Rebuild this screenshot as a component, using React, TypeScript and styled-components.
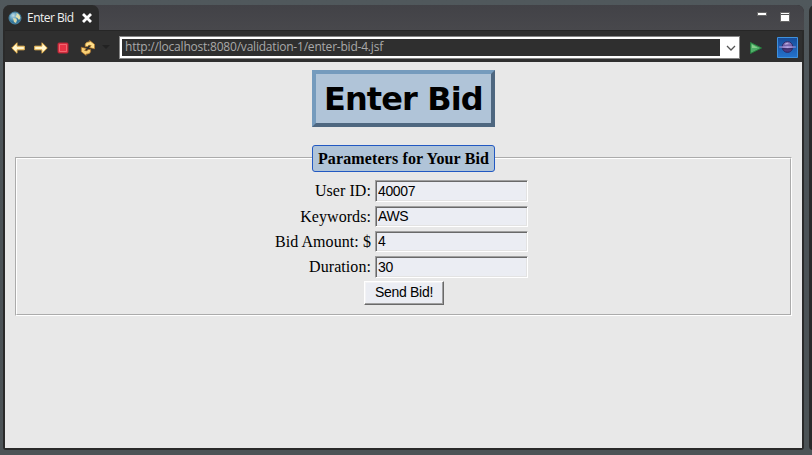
import React from "react";
import styled, { createGlobalStyle } from "styled-components";

const Global = createGlobalStyle`
  * { box-sizing: border-box; }
  body { margin: 0; overflow: hidden; background: #4c5357; }
`;

const Desktop = styled.div`
  display: flex;
  gap: 5px;
  width: 812px;
  height: 455px;
  padding: 5px 0 5px 3px;
  background: linear-gradient(#50585c, #4b5256 50%, #4c5356);
`;

const Window = styled.div`
  display: flex;
  flex-direction: column;
  width: 801px;
  height: 445px;
  flex: none;
  padding: 0 2px 2px;
  background: #2a2a2a;
  border-radius: 7px 7px 3px 3px;
`;

const Neighbour = styled.div`
  width: 10px;
  height: 445px;
  flex: none;
  background: #2a2a2a;
  border-radius: 6px 0 0 4px;
`;

const TabBar = styled.div`
  display: flex;
  height: 25px;
  flex: none;
  margin: 0 -2px;
  border-radius: 7px 7px 0 0;
  background: linear-gradient(#424247, #48484c);
`;

const Tab = styled.div`
  display: flex;
  align-items: center;
  width: 96px;
  height: 25px;
  padding-left: 5px;
  background: #2b2b2b;
  border-radius: 7px 7px 0 0;
`;

const TabTitle = styled.span`
  width: 50px;
  margin: 0 5px;
  font: 12px/16px "Open Sans", sans-serif;
  letter-spacing: -0.5px;
  white-space: nowrap;
  color: #f0f0f0;
`;

const WindowControls = styled.div`
  display: flex;
  margin-left: auto;
  padding: 7px 14px 0 0;
  gap: 13px;
`;

const Toolbar = styled.div`
  display: flex;
  align-items: center;
  height: 32px;
  flex: none;
  padding: 2px 4px 0 6px;
  background: #2f2f2f;
  border-top: 1px solid #262626;
`;

const Icon = styled.svg<{ $before?: number; $after?: number }>`
  display: block;
  flex: none;
  margin-left: ${(p) => p.$before ?? 0}px;
  margin-right: ${(p) => p.$after ?? 0}px;
`;

const Address = styled.div`
  display: flex;
  width: 621px;
  height: 23px;
  flex: none;
  border: 1px solid #858585;
  background: #fff;
  padding: 2px;
`;

const Url = styled.div`
  width: 598px;
  padding-left: 3px;
  background: #2f2f2f;
  color: #a9a9a9;
  font: 12px/16px "Open Sans", sans-serif;
  letter-spacing: -0.21px;
  white-space: nowrap;
`;

const Page = styled.main`
  flex: 1;
  padding: 8px 10px 0;
  background: #e8e8e8;
  color: #000;
  font: 16px/19px "Liberation Serif", serif;
`;

const Heading = styled.h1`
  width: 183px;
  height: 57px;
  margin: 0 0 17.6px 297px;
  padding-left: 8px;
  border: 4px solid;
  border-color: #759bbd #4e6780 #4e6780 #759bbd;
  background: #b0c4d8;
  font: bold 32px/51px "DejaVu Sans", sans-serif;
  letter-spacing: -0.9px;
  white-space: nowrap;
`;

const Fieldset = styled.fieldset`
  height: 171px;
  min-width: 0;
  margin: 0;
  padding: 8.4px 0 0;
  border: 2px groove #fff;
`;

const Legend = styled.legend`
  width: 183px;
  height: 27px;
  padding: 0;
  border: 1px solid #2259c2;
  border-radius: 3px;
  background: #b0c4d8;
  text-align: center;
  font-weight: bold;
  line-height: 25px;
  letter-spacing: 0.13px;
  white-space: nowrap;
`;

const Rows = styled.div`
  display: grid;
  grid-template-columns: 354px 153px;
  grid-template-rows: 22px 21px 21px 22px;
  column-gap: 4px;
  row-gap: 4px;
`;

const Label = styled.label`
  text-align: right;
  line-height: 21px;
  letter-spacing: 0.07px;
  white-space: nowrap;
`;

const Input = styled.input`
  width: 153px;
  height: 100%;
  min-height: 0;
  padding: 1px 2px;
  border: 1px solid;
  border-color: #a0a0a0 #fff #fff #a0a0a0;
  border-radius: 0;
  outline: none;
  background: #ebedf3;
  box-shadow: inset 1px 1px #696969, inset -1px -1px #e3e3e3;
  color: #000;
  font: 14px/17px "Liberation Sans", sans-serif;
  letter-spacing: -0.35px;
`;

const Submit = styled.button`
  display: block;
  width: 80px;
  height: 24px;
  margin: 3px 0 0 347px;
  padding: 0 0 1px;
  border: 1px solid;
  border-color: #fff #696969 #696969 #fff;
  background: #ebedf3;
  box-shadow: inset -1px -1px #a0a0a0, inset 1px 1px #f3f3f5;
  color: #000;
  font: 14px/20px "Liberation Sans", sans-serif;
  letter-spacing: -0.3px;
  white-space: nowrap;
`;

const ArrowIcon = ({ right, after }: { right?: boolean; after: number }) => (
  <Icon width="14" height="12" viewBox="0 0 14 12" $after={after}>
    <path
      d="M.8 6 6 .8V4.2h7.3v3.6H6v3.4Z"
      fill="#fff6cf"
      stroke="#eab650"
      transform={right ? "translate(14 0) scale(-1 1)" : undefined}
    />
  </Icon>
);

const fields = [
  { id: "user", label: "User ID:", value: "40007" },
  { id: "keywords", label: "Keywords:", value: "AWS" },
  { id: "amount", label: "Bid Amount: $", value: "4" },
  { id: "duration", label: "Duration:", value: "30" },
];

export default function App() {
  return (
    <Desktop>
      <Global />
      <Window>
        <TabBar>
          <Tab>
            <Icon width="14" height="14" viewBox="0 0 14 14">
              <defs>
                <radialGradient id="globe" cx=".35" cy=".3">
                  <stop offset="0" stopColor="#c3dde2" />
                  <stop offset=".55" stopColor="#6ba6c4" />
                  <stop offset="1" stopColor="#34769c" />
                </radialGradient>
              </defs>
              <circle cx="7" cy="7" r="6" fill="url(#globe)" stroke="#4a84a2" />
              <path d="M8.500 1.8 11.5 4l1 3-1.5 2-1.5-2-2-1 1-2Z" fill="#e0dfae" />
              <path d="M5 7l3 .5L9 9l-1 3-2-1Z" fill="#d8dcb0" />
            </Icon>
            <TabTitle>Enter Bid</TabTitle>
            <Icon width="10" height="10" viewBox="0 0 10 10">
              <path d="M1 1l8 8M9 1 1 9" stroke="#fff" strokeWidth="2.8" />
            </Icon>
          </Tab>
          <WindowControls>
            <Icon width="10" height="10" viewBox="0 0 10 10">
              <path d="M.5.5h9v3h-9Z" fill="#fff" stroke="#666" />
            </Icon>
            <Icon width="10" height="10" viewBox="0 0 10 10">
              <path d="M.5.5h9v9h-9Z" fill="#fff" stroke="#666" />
              <path d="M1 2.5h8" stroke="#555" />
            </Icon>
          </WindowControls>
        </TabBar>
        <Toolbar>
          <ArrowIcon after={9} />
          <ArrowIcon right after={9} />
          <Icon width="12" height="12" viewBox="0 0 12 12" $after={11}>
            <rect x="1" y="1" width="10" height="10" rx="1" fill="#e73345" stroke="#b52838" />
            <path d="M2.5 9.5v-7H9.5v7Z" fill="none" stroke="#f0666f" />
          </Icon>
          <Icon width="16" height="16" viewBox="0 0 16 16" $after={6}>
            <path
              d="M5.200 6.500V4.500Q5.800 1.600 9.600 1.900V.5L14.500 4.300V8.800L9.500 7.600 11.200 5.600Q8.500 4.300 7.900 6.500Z"
              fill="#ffe08b"
              stroke="#b97a28"
              strokeWidth=".7"
            />
            <path
              d="M10.600 9.500V11.500Q10 14.400 6.200 14.100V15.500L1.300 11.700V7.200L6.300 8.400 4.600 10.400Q7.300 11.700 7.900 9.500Z"
              fill="#f9d074"
              stroke="#a96c24"
              strokeWidth=".7"
            />
          </Icon>
          <Icon width="8" height="5" viewBox="0 0 8 5" $after={9}>
            <path d="M0 0h8L4 4Z" fill="#222" />
          </Icon>
          <Address>
            <Url>http://localhost:8080/validation-1/enter-bid-4.jsf</Url>
            <Icon width="17" height="17" viewBox="0 0 17 17">
              <path d="m7 7 4 4 4-4" fill="none" stroke="#555" strokeWidth="1.3" />
            </Icon>
          </Address>
          <Icon width="12" height="12" viewBox="0 0 12 12" $before={10} $after={15}>
            <path d="M.5.5v11L11.5 6Z" fill="#4fae68" stroke="#277c3e" />
            <path d="M2 2.5 8 6H2Z" fill="#86ce8c" />
          </Icon>
          <Icon width="21" height="21" viewBox="0 0 21 21">
            <defs>
              <linearGradient id="sky" x2="0" y2="1">
                <stop stopColor="#174c99" />
                <stop offset="1" stopColor="#2472cc" />
              </linearGradient>
              <linearGradient id="planet" x2="0" y2="1">
                <stop stopColor="#9a88c8" />
                <stop offset=".5" stopColor="#5e4b96" />
                <stop offset="1" stopColor="#443275" />
              </linearGradient>
            </defs>
            <path d="M.5.5h20v20H.5Z" fill="url(#sky)" stroke="#3f91dc" />
            <circle cx="10.5" cy="10" r="5.4" fill="url(#planet)" stroke="#2c2a68" />
            <path d="M7.5 7.5Q9.500 5.500 12 7Z" fill="#d7c9ee" />
            <path d="M6 11.8h9" stroke="#292053" />
            <path d="M2 10 10.5 9.2 19 10l-8.500.9Z" fill="#c5b3eb" stroke="#9a8bd0" strokeWidth=".5" />
          </Icon>
        </Toolbar>
        <Page>
          <Heading>Enter Bid</Heading>
          <Fieldset>
            <Legend>Parameters for Your Bid</Legend>
            <Rows>
              {fields.map((f) => (
                <React.Fragment key={f.id}>
                  <Label htmlFor={f.id}>{f.label}</Label>
                  <Input id={f.id} defaultValue={f.value} />
                </React.Fragment>
              ))}
            </Rows>
            <Submit>Send Bid!</Submit>
          </Fieldset>
        </Page>
      </Window>
      <Neighbour />
    </Desktop>
  );
}
